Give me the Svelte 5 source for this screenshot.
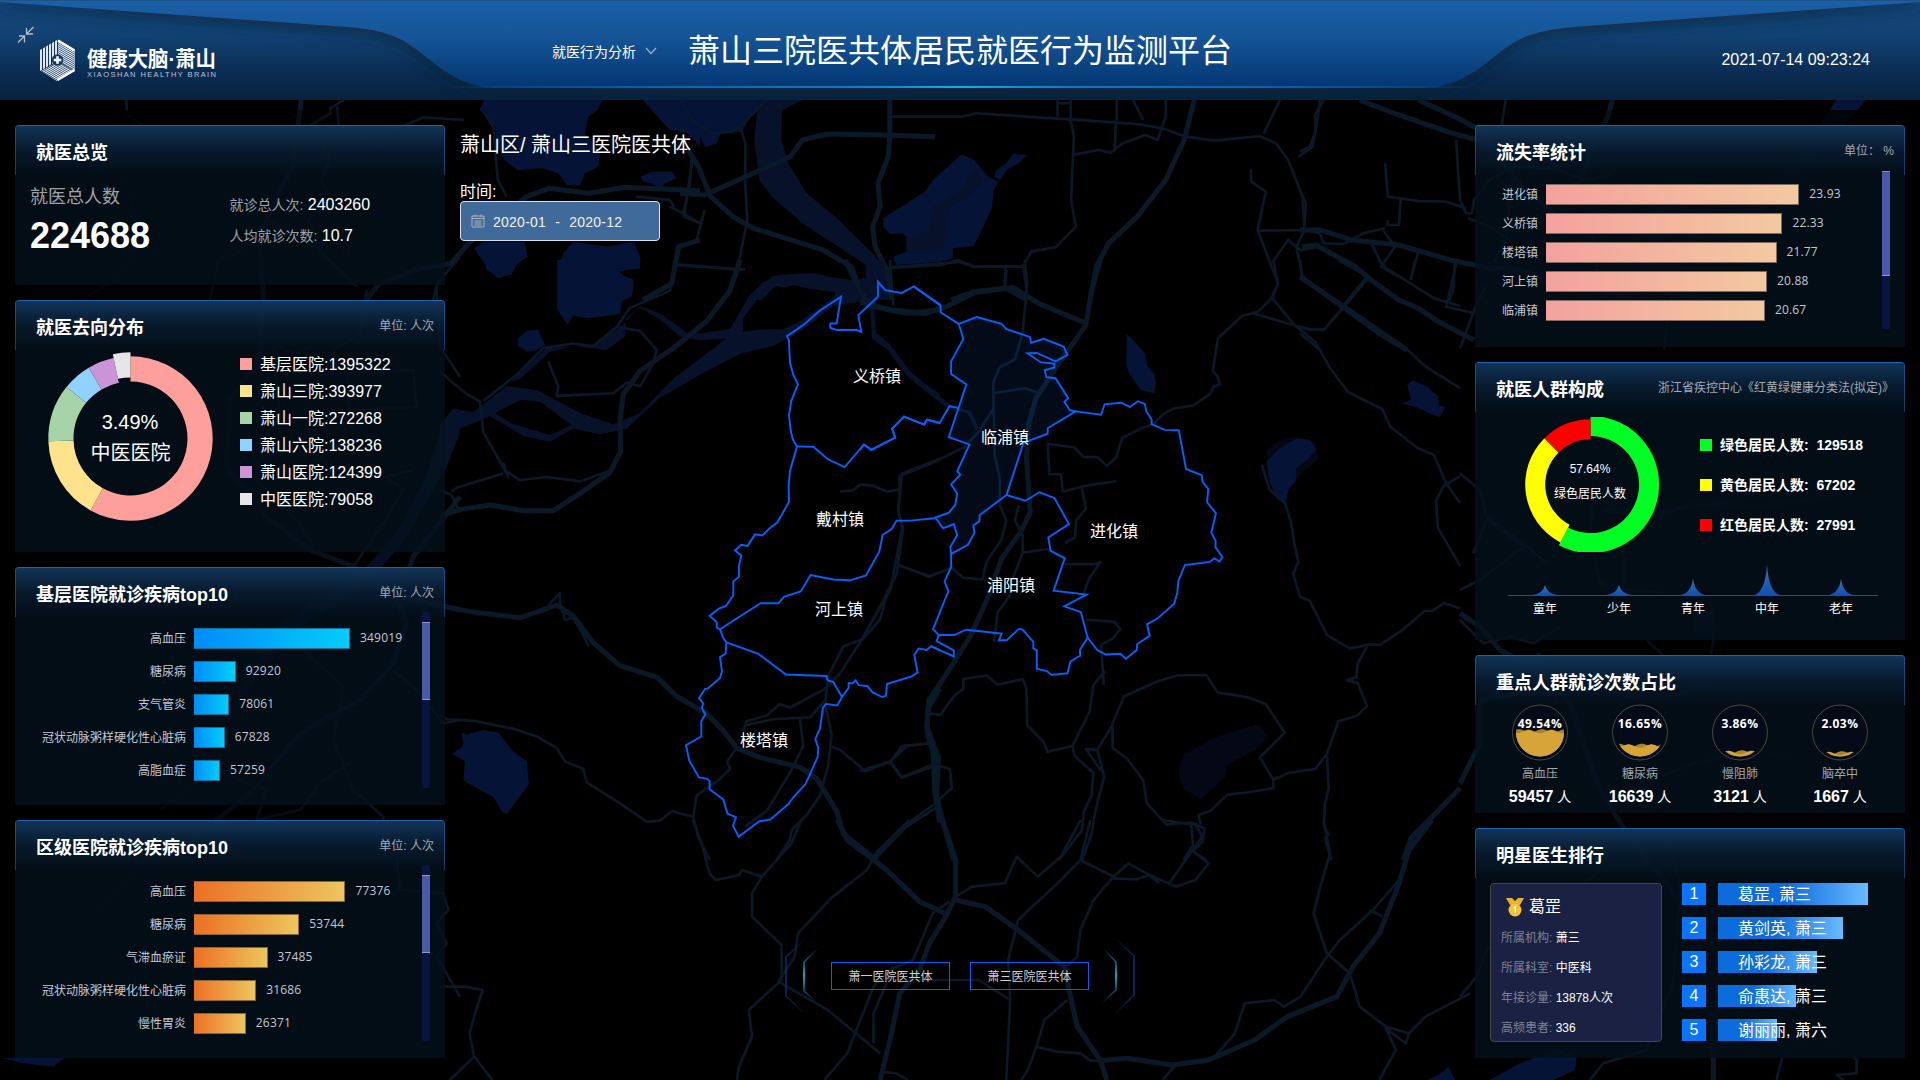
<script>
  const destinations = [
    { name: '基层医院', value: 1395322, color: '#fe9f9c' },
    { name: '萧山三院', value: 393977, color: '#fee38c' },
    { name: '萧山一院', value: 272268, color: '#a6d3a7' },
    { name: '萧山六院', value: 138236, color: '#90d2fd' },
    { name: '萧山医院', value: 124399, color: '#cb95d5' },
    { name: '中医医院', value: 79058, color: '#e6e6e6' }
  ];
  const residents = [
    { name: '绿色居民人数', value: 129518, color: '#00ff22' },
    { name: '黄色居民人数', value: 67202, color: '#ffff00' },
    { name: '红色居民人数', value: 27991, color: '#ff0000' }
  ];
  const diseaseCharts = [
    {
      title: '基层医院就诊疾病top10', tone: 'blue', scale: 155.7 / 349019,
      rows: [['高血压', 349019], ['糖尿病', 92920], ['支气管炎', 78061], ['冠状动脉粥样硬化性心脏病', 67828], ['高脂血症', 57259]]
    },
    {
      title: '区级医院就诊疾病top10', tone: 'orange', scale: 151 / 77376,
      rows: [['高血压', 77376], ['糖尿病', 53744], ['气滞血瘀证', 37485], ['冠状动脉粥样硬化性心脏病', 31686], ['慢性胃炎', 26371]]
    }
  ];
  const lossRates = [['进化镇', 23.93], ['义桥镇', 22.33], ['楼塔镇', 21.77], ['河上镇', 20.88], ['临浦镇', 20.67]];
  const ages = [['童年', 10.5], ['少年', 10.5], ['青年', 17], ['中年', 31], ['老年', 17]];
  const focus = [
    { name: '高血压', pct: '49.54%', count: 59457, level: -1 },
    { name: '糖尿病', pct: '16.65%', count: 16639, level: 13.5 },
    { name: '慢阻肺', pct: '3.86%', count: 3121, level: 20 },
    { name: '脑卒中', pct: '2.03%', count: 1667, level: 21 }
  ];
  const doctor = [['所属机构', '萧三'], ['所属科室', '中医科'], ['年接诊量', '13878人次'], ['高频患者', '336']];
  const ranking = [['葛罡, 萧三', 150], ['黄剑英, 萧三', 125], ['孙彩龙, 萧三', 99], ['俞惠达, 萧三', 78], ['谢丽丽, 萧六', 59]];
  const towns = [
    ['义桥镇', 877, 377], ['戴村镇', 840, 520], ['河上镇', 839, 610], ['楼塔镇', 764, 741],
    ['临浦镇', 1005, 438], ['进化镇', 1114, 532], ['浦阳镇', 1011, 586]
  ];

  // Ring segments, clockwise from twelve o'clock; one segment may be enlarged.
  function ring(items, cx, cy, inner, outer, active, grow) {
    const total = items.reduce((s, d) => s + d.value, 0);
    let a = 0;
    return items.map((d, i) => {
      const b = a + (d.value / total) * Math.PI * 2;
      const g = i === active ? grow : 0;
      const p = (r, t) => `${(cx + r * Math.sin(t)).toFixed(2)} ${(cy - r * Math.cos(t)).toFixed(2)}`;
      const big = b - a > Math.PI ? 1 : 0;
      const o = outer + g, n = inner + g;
      const path = `M${p(o, a)}A${o} ${o} 0 ${big} 1 ${p(o, b)}L${p(n, b)}A${n} ${n} 0 ${big} 0 ${p(n, a)}Z`;
      a = b;
      return { path, color: d.color };
    });
  }
  function wave(level, phase) {
    let d = 'M-26 30';
    for (let x = -26; x <= 26; x += 1) d += `L${x} ${(level + 1.7 * Math.cos((x * 2 * Math.PI) / 23 + phase)).toFixed(2)}`;
    return d + 'L26 30Z';
  }
  const destRing = ring(destinations, 86.5, 88.5, 57, 82.2, 5, 4);
  const resRing = ring(residents, 68.5, 67.5, 45.3, 65.3, 0, 3.3);

  // Base map, grouped in sheets: each has its own origin and scale.
  const sheets = [
    {
      t: 'scale(.4464 .3333)',
      water: ['M1085 300H1350L1338 330L1318 350L1310 400L1345 460L1340 500L1310 520L1300 556L1270 556L1250 520L1215 505L1160 510L1130 480L1110 430V380L1075 330Z',
        'M1440 300H1568V440L1540 400L1500 390L1470 345Z', 'M1062 745L1085 725H1175L1182 770L1160 790L1145 820L1115 835L1085 790Z',
        'M1250 900V810L1262 760L1285 725L1360 740L1420 725L1435 775L1432 808L1400 800L1382 810L1420 850L1415 890L1400 900Z',
        'M1435 530L1460 515L1505 515L1515 535L1490 550L1478 565L1460 550L1440 545Z'],
      river: [],
      major: ['M675 300L665 400L655 500L610 620L580 720L590 900', 'M820 900L850 850L930 810L1010 790L1050 730L1120 650L1180 590L1230 565L1320 580L1400 562L1568 572', 'M1568 720L1520 740L1505 850L1440 900'],
      minor: ['M283 300L285 345L325 380L310 440L325 500L280 530L300 640L320 720L260 840L180 900', 'M770 300L740 325L740 340L690 380L720 430L740 480L720 540L740 600L690 660L720 760L800 860', 'M755 320L760 390L800 400L850 440L865 400L950 352L1040 360', 'M1085 340L1105 380L1115 540L1135 590', 'M1568 800L1510 795', 'M970 900L980 850L1030 770', 'M470 900L490 780L530 760L600 660L640 690', 'M1550 460L1545 560M1530 640L1568 670M1500 620L1530 640L1540 590', 'M1425 590L1500 600L1510 620']
    },
    {
      t: 'translate(680 0) scale(.4082 .3333)',
      water: ['M0 300H220L180 340L150 395L100 400L90 430L62 442L50 410L10 385H0Z', 'M690 463L720 480L755 530L780 545L768 570L765 620L740 690L718 738L668 745V775L640 785L530 795L522 770L555 755V712L545 700L515 702L498 680V655L600 575L620 540Z', 'M770 530L775 510L800 490L815 462L850 465L830 490L800 510L785 540Z'],
      river: ['M192 300H300L250 330L248 420L265 490L310 580L380 650L480 770L500 830L520 900H430L380 890V850L300 835L262 862L240 850L200 900H165L200 850L240 825L330 820L400 842L455 835L455 795L400 750L300 670L225 590L195 540L182 420Z', 'M720 500L745 535L715 585L660 620L655 690L645 750L560 760L562 715L610 690L620 620L690 570Z'],
      major: ['M0 580L60 585L180 520L270 470L300 420L360 402L500 405L625 410', 'M20 450L45 500L75 590L130 650L180 685L350 750L420 800L450 900', 'M1260 300L1235 420L1190 540L1120 650L1050 730L1020 800L1005 900', 'M514 300V400L510 470L485 550L490 620L472 680L478 740L505 805L520 900', 'M665 900L720 875L800 865L850 900'],
      minor: ['M520 350H690L725 340L850 350L1000 362L1120 372L1180 385L1240 410L1310 422L1420 408L1460 430L1490 480L1525 590L1530 690L1510 740L1525 830L1568 870', 'M925 300V350M955 310H925M957 300V360L965 410L958 600L970 680L920 742L860 755L840 800L850 870', 'M510 805L640 795L680 780L720 800H840', 'M960 465L1025 450L1055 458L1085 430L1140 405L1170 420L1180 385M1068 360L1065 450M1110 300L1135 360M1190 300V350L1180 385', 'M1070 300V360', 'M1470 300L1430 400', 'M1398 508L1400 545L1435 575L1415 690L1440 770L1465 850L1450 900M1420 692L1568 690M1455 780L1490 720L1520 750L1568 740', 'M150 390L160 430V560L165 660L155 720L140 810L110 900', 'M0 795L150 810M0 735L40 725L60 630M30 480L10 650L50 670', 'M1568 300L1560 370L1550 440L1515 470', 'M800 810L795 860', 'M0 300L30 360L80 400L130 395L180 340L210 300']
    },
    {
      t: 'translate(1300 0) scale(.3954 .3333)',
      water: ['M1355 300H1430L1410 330L1300 480L1180 620L1100 700L1075 690L1150 600L1250 480L1340 330Z'],
      river: [],
      major: ['M150 300L250 345L380 398L450 420L500 460', 'M300 300L400 355L470 400L520 500L560 560L640 640', 'M790 300L780 345L740 450L700 560', 'M0 690L50 690L130 720L250 735L380 780L480 805L560 810', 'M0 830L60 880L200 1000L270 1050', 'M560 810L640 850L800 880L900 870L1050 900', 'M5 740L40 735L140 800L180 840L250 900L300 925L350 965L440 1020'],
      minor: ['M60 300L38 345L40 390L25 440L0 455', 'M215 490L222 590L300 603L370 605L420 625M255 595L250 675H220L222 660', 'M395 420L400 520L405 600L420 640L435 640L440 600L480 540L540 500L640 505L720 540L790 525', 'M0 570L15 610L10 690L50 700L60 730L110 732L160 700L215 685', 'M210 690L240 740L205 800L250 830M180 730L210 800M300 750L280 840M395 790L370 920L440 940', 'M110 915L170 830M0 985L60 990L115 915', 'M520 300L510 380M540 500L520 720L490 790', 'M425 655L480 680L530 720M740 710L760 860M940 880L920 1050', 'M0 1000L50 1050M405 1045L450 900L470 860']
    },
    {
      t: 'translate(440 260) scale(.3333 .3827)',
      water: ['M352 0H600V22L530 30L545 40L580 50L575 80L545 110L540 142L440 152L400 145L382 168L352 130Z', 'M130 0H235L215 38L175 47L140 25Z', 'M233 205L260 185L295 183L315 222L290 235L262 240L235 225Z', 'M38 1290L70 1270L65 1235L80 1240L130 1228L175 1235L220 1285L260 1310L267 1370L200 1448L185 1440L160 1403L70 1360L75 1310Z'],
      river: ['M1280 0H1330L1340 60L1300 120L1230 100L1280 50Z', 'M0 430L40 388L100 398L200 330L290 340L420 400L520 430L600 400L700 310L860 205L780 210L720 200L660 155L600 125L560 150L555 200L500 235L400 225L330 240L240 310L210 320L320 230L460 222L550 170L600 120L660 140L750 195L870 180L930 90L1000 42L1080 35L1220 50L1300 90L1250 110L1180 120L1090 180L1000 225L900 245L780 300L660 360L560 440L480 455L400 440L330 475L250 460L150 408L60 440L20 540L0 570ZM910 150L960 95L1010 68L1035 72L1060 65L1110 75L1200 85L1130 130L1070 165L1030 180L960 182L908 188ZM165 400L240 366L300 370L395 432L330 458L210 425Z', 'M1300 90L1308 190L1350 220L1400 290L1500 350V362L1440 325L1380 280L1340 230L1295 200L1290 100Z'],
      major: ['M900 0L870 80L800 160L700 230L600 290L550 350L540 420L542 500L510 555L420 610L340 655L250 655L150 640L60 652L0 668', 'M0 903L100 920L240 935L350 902L400 930L460 1000L540 1060L650 1090L710 1140L800 1185L850 1230L890 1275L960 1300L1080 1325L1130 1355L1190 1440L1210 1500L1310 1568', 'M1215 0L1250 60L1290 120L1400 140L1500 130', 'M1500 1120L1465 1170L1460 1230L1480 1290L1485 1400L1500 1470'],
      minor: ['M0 290L30 315L80 350L120 370L130 450L195 550L240 575L320 567L420 578L520 548', 'M705 0L690 80L570 125L530 175L460 225L400 218L310 230L230 300L130 368', 'M710 12L915 25M530 175L600 185L650 235L640 270L600 330L560 320L520 348L350 355L355 330L325 265', 'M35 605L50 595L190 558M0 600L35 615L60 660', 'M0 1190L20 1200L110 1205L220 1225L290 1245L350 1275L375 1310L430 1330L440 1365L540 1420L620 1468L660 1465L695 1440L760 1455L775 1510L810 1568', 'M1350 0L1360 120', 'M1200 605L1240 602L1260 587L1300 590L1340 605L1380 600L1378 565L1500 522M1380 600L1375 660L1390 700L1370 820L1330 890L1260 1000L1200 1080L1155 1120L1050 1170L1020 1160L980 1190L920 1205L910 1230', 'M1375 797L1470 827L1500 815', 'M1345 860L1320 940L1270 990L1210 1010L1165 1085L1155 1160L1175 1240L1165 1320L1140 1400L1100 1450L1055 1490L1050 1515L1010 1568', 'M890 1275L862 1310L870 1330L835 1360L800 1380L770 1400L760 1455M920 1215L1000 1200L1110 1195L1155 1150', 'M1080 1200L1090 1270L1050 1340L980 1440L915 1480', 'M1170 1270L1200 1280L1275 1335L1350 1312L1400 1270L1480 1262M1350 1312L1385 1352L1500 1310M1500 1425L1400 1480L1310 1560', 'M325 902L360 870V895L375 940L400 935L430 980L445 1008', 'M190 530L205 570']
    },
    {
      t: 'translate(860 260) scale(.3827)',
      shade: ['M835 1320L845 1295L920 1250L985 1228L1040 1213L1068 1245L1040 1275L960 1320L955 1350L890 1410L845 1380L833 1345Z', 'M1062 500L1090 475L1145 460L1190 480L1198 520L1150 560L1130 590L1080 570Z'],
      water: ['M697 195L715 210L745 245L750 275L770 300L773 325L768 348L735 340L705 300L695 275L697 235Z', 'M1062 525L1100 490L1140 467L1175 470L1192 495L1170 520L1140 545L1138 580L1120 600L1112 635L1090 625L1070 580Z', 'M1418 375L1440 365L1430 325L1445 315L1480 330L1510 355L1512 380L1530 385L1515 410L1485 400L1455 385Z', 'M85 0H230L150 10Z'],
      river: ['M0 60L50 50L65 70L40 110L0 80Z', 'M35 130L40 195L90 235L130 290L200 350L240 380L290 395L310 440L302 445L280 400L230 388L180 350L120 300L80 240L30 205Z'],
      major: ['M628 0L605 80L590 170L520 270L460 360L440 430L435 520L445 660L420 710L370 780L335 880L290 980L240 1060L180 1150L175 1220L205 1300L200 1400L220 1480L245 1568', 'M0 110L80 130L170 140L230 120L300 85L400 72L470 115L590 165', 'M0 1535L40 1568', 'M1568 1380L1500 1450L1440 1510L1420 1568'],
      minor: ['M75 20L260 5L300 18L430 16M380 20L378 75M430 0L437 60L425 190L405 260L365 280L348 320L352 510L365 570V640L382 680L370 730L330 790L320 835L270 830L240 805L180 827L100 797', 'M350 348L430 335L470 348M350 385L310 450L270 490L220 515L110 558L100 650L110 700L80 860L0 1000', 'M1080 0L1092 60L1075 100L1040 135L1000 145L935 205L922 290L935 305L940 325L925 330L915 350L870 380L820 388L790 405L765 430L735 440L685 465L670 515L645 538L620 515L585 515L560 490L490 480L495 560L525 560L530 605L590 590L670 578', 'M1150 0L1155 45L1260 115L1420 225L1480 280L1568 335M1250 0L1330 45L1400 100L1480 140L1568 195M1330 45L1215 180L1180 183L1080 155L1020 138M1355 0L1372 20L1500 100L1568 120M1450 0L1440 50M1555 0L1550 80L1530 125', 'M1078 100L1135 170L1190 215L1230 285L1275 345L1365 390L1385 435L1455 490L1500 510L1530 580L1568 635M1568 565L1525 590L1505 630L1510 700L1568 800', 'M1050 535L1070 600L1110 635L1125 680L1135 740L1145 790L1132 820L1150 880L1175 890L1220 980L1280 1015L1330 1005L1360 1005L1420 965L1475 917H1495L1525 897L1568 910', 'M1325 1010L1300 1055L1297 1090L1272 1098L1300 1105L1325 1165L1300 1190L1250 1205L1220 1290L1190 1330L1120 1340L1080 1358L1045 1300L1110 1235L1060 1160L1010 1142L935 1130L905 1085L830 1085L780 1100L690 1140L660 1210V1275L700 1305L740 1360L750 1420L800 1475L865 1470L870 1530L845 1568M865 1470L900 1485L895 1520L870 1545L905 1568M1080 1358V1380L1020 1390L960 1397L915 1440L885 1450L890 1475', 'M1220 1295L1225 1380L1215 1420L1212 1480L1225 1500L1215 1510L1232 1568', 'M180 1185L210 1188L245 1140L270 1120V1095L330 1085L360 1110L425 1095L435 1120L437 1215L480 1260L490 1285L555 1270L600 1180L610 1110L640 1075', 'M580 595L590 650L565 680L562 725L535 740M535 795L615 795L628 790L600 830L585 870M590 940L665 945L680 965L660 990L630 1005L637 1110', 'M555 1270L560 1295L610 1340L605 1400L585 1440L580 1490L520 1568M660 1215L620 1280L590 1278L630 1335M620 1280L638 1350L615 1440L605 1500L580 1568', 'M0 1335L80 1310L110 1270L190 1262M80 1310L110 1352L200 1320L235 1330L240 1380L190 1425L100 1490L40 1560', 'M415 640L405 680L425 720V765L490 755L535 780M425 765L400 830L390 880L360 920L350 1000']
    },
    {
      t: 'translate(440 820) scale(.6569 .3333)',
      water: ['M1503 780L1520 765L1535 740L1545 780Z'],
      river: [],
      major: ['M605 0L620 60L680 150L730 245L775 285M765 0L785 120V230L770 290L745 370L730 450L700 520L685 660L670 780M785 240L830 260L880 330L950 440L970 620L1005 720L1015 780', 'M1510 0L1475 90L1460 190L1430 340L1390 440L1365 530L1290 590L1240 660L1170 720L1115 735L1045 715L1005 722'],
      minor: ['M385 0L400 80L410 160L420 180L455 165L460 150L490 170L475 220V290L520 375L520 480L470 570L475 650L455 740L452 780', 'M550 0L535 70L490 170M715 0L665 95L650 150L595 235L545 340L540 410L515 485L590 570L670 700', 'M990 0L975 120L940 190L880 300L865 420L868 540L862 780M975 0L945 110L910 170L878 110L860 190L810 200L785 230', 'M975 120L1025 170L995 240L975 330L970 410L950 445M1025 175L1060 178L1080 165L1120 200L1150 180L1170 130L1140 85M1110 190L1160 50L1150 10M1025 170L1048 130L1080 165L1095 190M1100 0L1150 15', 'M775 245L750 280L735 350L720 420L690 445L660 580V670M690 440L660 500L620 700L585 780M720 480L820 480L868 540', 'M955 540L920 600L908 680L940 695L975 700L990 722H1005M908 680L895 750L885 780M1120 735L1100 780', 'M1345 0L1355 100L1340 200L1330 280L1350 400L1385 460L1400 560L1440 620L1475 640L1500 590L1568 520M1475 640L1470 670L1440 625L1455 690L1430 780', 'M1460 180L1420 270L1370 360L1350 410L1310 530L1285 560L1270 540L1225 550L1210 640L1175 720M1435 290L1415 270', 'M670 755L695 760L712 780', 'M0 500L40 500L65 510L55 570L45 640L52 710L80 780M52 710L15 780']
    },
    {
      t: 'translate(1460 350) scale(.3333)',
      water: ['M700 790L760 780L770 830L740 865L705 860ZM85 1010L240 905L250 950L100 1030Z', 'M90 2190L180 2140L290 2100L350 2120L345 2160L280 2190Z'],
      river: [],
      major: ['M0 790L60 830L120 900L250 970L330 1060L370 1180L420 1320L500 1450L570 1540L620 1600L700 1720L740 1900L760 2100V2190', 'M430 480L600 490L720 460L900 470L1100 440L1330 350', 'M0 1300L60 1180L60 1050L180 1030L330 1030'],
      minor: ['M0 370L60 420L80 500L190 580L260 640M40 610L80 510L190 590L60 690L0 720', 'M0 810L70 880L150 860L220 880L300 830M150 920L180 950M300 980L320 1000L380 1005L500 1040L640 1040L740 1000L760 870L690 780', 'M560 870L700 1000L860 1050L900 1160M460 1380L600 1280L700 1240L900 1200L1000 1230', 'M400 400L390 560L420 700L500 720L750 740L760 860M490 580L490 710', 'M0 1940L50 1880L80 1800L170 1720L400 1580L440 1520', 'M390 2190L430 2140L560 2100L640 1900L660 1600L620 1450', 'M950 2190L970 2110L1050 2060L1130 2080L1190 2130L1190 2170L1130 2175L1150 2190']
    },
    {
      t: 'translate(0 290) scale(.3333)',
      water: ['M0 2303H195L160 2330L110 2325L60 2318Z', 'M1358 1390L1380 1375V1405Z'],
      river: ['M1330 400L1370 350L1380 430L1340 530L1290 620L1220 740L1130 850L1000 950L850 1040L760 1180L720 1260L680 1300L740 1160L830 1010L960 920L1100 830L1180 740L1270 580Z'],
      major: ['M790 0L780 200L690 330L680 530L800 680L930 780L1060 830L1180 900L1220 1000L1180 1120L1080 1230L900 1330L760 1500L640 1600L400 1750L250 1900L160 2100', 'M1380 620L1240 800L1200 920L1380 960'],
      minor: ['M1100 0L1080 130L1000 180L980 250L1240 240L1250 350L1050 360L1040 240', 'M1310 0L1320 170L1380 260', 'M1180 1140L1250 1200L1330 1300L1380 1290M900 1070L1030 1190L1000 1350L1060 1500L1150 1580L1150 1680L1190 1700L1200 1800L1330 1810L1345 1860L1310 1900L1340 1960L1310 2000L1380 2120', 'M480 1560L640 1440L800 1500L770 1590L900 1560L960 1480L1060 1410', 'M940 770L900 700L720 520L840 380L820 160L880 190L940 170M1060 830L1150 700L1210 600L1160 560L1240 540']
    }
  ];

  // District outlines, drawn on the two central sheets.
  const D = 'translate(440 260) scale(.3333 .3827)';
  const E = 'translate(860 260) scale(.3827)';
  const borders = [
    [D, 'M1314 96V57L1336 79L1385 86L1422 69L1500 118M1314 96L1255 144L1264 188L1250 183H1190L1171 177V166H1190L1203 96L1140 132L1090 170L1041 199L1047 210L1050 268L1060 300L1074 325L1054 368L1047 405L1052 445L1059 470L1071 487L1050 552L1046 590L1047 632L1012 686L990 700L967 720L945 717L923 747L904 744L885 759L904 772L897 800V828L880 840V876L858 904L838 910L809 930L830 946V960L840 965L850 988L859 999L857 1028L840 1038L846 1075L840 1092L805 1119L795 1121L777 1145L790 1159L785 1170L796 1187L784 1205V1245L738 1268L748 1308L777 1352L800 1355L809 1361V1383L850 1410L863 1447L888 1456L879 1478L896 1507L957 1467L991 1462L1045 1422L1060 1404L1096 1370L1114 1336L1133 1299L1135 1275L1126 1252L1140 1224L1149 1170L1158 1160L1192 1164L1206 1142L1226 1118V1106L1238 1106L1247 1098L1256 1111L1282 1113L1298 1130L1327 1142L1338 1138L1341 1108L1415 1088L1433 1078L1423 1032L1436 1015L1460 1019L1474 1009L1500 1020'],
    [D, 'M1071 487L1120 488L1163 520L1214 541L1272 482L1294 496L1366 464L1356 441L1392 409L1453 430L1461 417L1500 426'],
    [D, 'M840 965L962 897H1015L1032 880L1082 866L1112 823L1180 835L1230 837L1278 824L1318 762L1328 718L1355 703L1370 681H1412L1490 674'],
    [D, 'M859 999L955 1029L1038 1083L1160 1087L1163 1098L1180 1103L1206 1142'],
    [E, 'M140 69L210 117L211 137L258 167M0 497L10 482L30 496L92 464L84 441L115 409L168 430L175 417L208 426L234 382L258 387'],
    [E, 'M383 614L432 629L469 607L508 622L546 690L492 725L498 760L535 779L506 864L592 874L534 905L577 920L595 987L575 1018V1034L550 1049L542 1080L500 1084L488 1074L462 1068V1020L453 1015V998L425 966L415 964L384 993L363 994L370 976L277 966L246 980H206L200 996L245 1020V1036L185 1009'],
    [E, 'M560 395L630 404L639 377L682 373L705 384L726 369L744 376L748 395L762 417V429L796 444L833 445L852 546L893 562L895 580L910 598L907 633L930 662L918 713L929 733V751L947 776L940 788L926 780L914 789L849 797L832 839L829 870L821 898L777 937L750 952L757 982L724 1004L723 1019L695 1042L680 1029L642 1031L620 1019L595 987'],
    [E, 'M238 768V802L221 840L231 865L191 964L206 980']
  ];
  const active = 'M258 167L305 149L370 167L382 180L444 201L447 216L480 206L532 226L542 248L511 265L462 243L438 244L472 267L508 271V281L483 288L487 306L511 309L544 361L534 371L548 392L563 396L491 439L490 454L427 478L383 614L313 666L312 683L296 693L299 713L282 744L238 768L236 750L254 719L245 690L217 701L197 673L232 660L249 640L254 610L238 586L262 561L254 552L286 482L232 463L278 325L238 298V265L270 206Z';
</script>

{#snippet panelHead(title, note)}
  <header class="panel-head">
    <h2>{title}</h2>
    {#if note}<span class="note">{note}</span>{/if}
  </header>
{/snippet}

{#snippet bars(rows, tone, scale, thumb)}
  <div class="chart {tone}">
    <ul class="bars">
      {#each rows as [name, value]}
        <li><span class="bar-name">{name}</span><span class="bar" style="width:{value * scale + 0.4}px"></span><span class="bar-value">{value}</span></li>
      {/each}
    </ul>
    <div class="scroll"><i class={thumb}></i></div>
  </div>
{/snippet}

<div class="screen">
  <svg class="map" width="1920" height="1080" viewBox="0 0 1920 1080">
    <defs>
      <linearGradient id="dimL"><stop offset="0" stop-color="#000" stop-opacity=".95" /><stop offset=".35" stop-color="#000" stop-opacity=".75" /><stop offset="1" stop-color="#000" stop-opacity="0" /></linearGradient>
      <linearGradient id="dimR"><stop offset="0" stop-color="#000" stop-opacity="0" /><stop offset=".65" stop-color="#000" stop-opacity=".65" /><stop offset="1" stop-color="#000" stop-opacity=".95" /></linearGradient>
    </defs>
    {#each sheets as s}
      <g transform={s.t}>
        {#each s.shade ?? [] as d}<path class="shade" {d} />{/each}
        {#each s.water as d}<path class="water" {d} />{/each}
        {#each s.river as d}<path class="river" {d} />{/each}
        {#each s.major as d}<path class="road major" {d} />{/each}
        {#each s.minor as d}<path class="road" {d} />{/each}
      </g>
    {/each}
    <rect x="0" y="110" width="460" height="948" fill="url(#dimL)" />
    <rect x="1460" y="110" width="460" height="948" fill="url(#dimR)" />
    <g transform={E}><path class="border active" d={active} /></g>
    {#each borders as [t, d]}<g transform={t}><path class="border" {d} /></g>{/each}
    {#each towns as [name, x, y]}<text class="town" {x} y={y + 5}>{name}</text>{/each}
  </svg>

  <header class="top">
    <svg class="top-bg" width="1920" height="100" viewBox="0 0 1920 100">
      <defs>
        <linearGradient id="base" x2="0" y2="1"><stop offset="0" stop-color="#15487c" /><stop offset=".35" stop-color="#124274" /><stop offset=".75" stop-color="#0a2b50" /><stop offset="1" stop-color="#08223e" /></linearGradient>
        <linearGradient id="mid" x2="0" y2="1"><stop offset="0" stop-color="#1b60a8" /><stop offset=".4" stop-color="#165597" /><stop offset="1" stop-color="#023672" /></linearGradient>
        <linearGradient id="glow"><stop offset="0" stop-color="#0a5db4" stop-opacity="0" /><stop offset=".2" stop-color="#0560b8" /><stop offset=".4" stop-color="#0a78d0" /><stop offset=".5" stop-color="#08b4e4" /><stop offset=".6" stop-color="#0a78d0" /><stop offset=".8" stop-color="#0560b8" /><stop offset="1" stop-color="#0a5db4" stop-opacity="0" /></linearGradient>
        <filter id="soft" x="-5%" y="-30%" width="110%" height="180%"><feGaussianBlur stdDeviation="8" /></filter>
      </defs>
      <rect width="1920" height="100" fill="url(#base)" />
      <path filter="url(#soft)" fill="#0c2036" opacity=".75" d="M0 6L346 32C380 34 402 42 422 58C452 80 470 94 505 94H1415C1450 94 1468 80 1498 58C1518 42 1540 34 1574 32L1920 6V0H0Z" />
      <path fill="url(#mid)" d="M0 0V2L346 27C380 29 398 36 416 49C446 73 464 88 500 88H1420C1456 88 1474 73 1504 49C1522 36 1540 30 1574 27L1920 2V0Z" />
      <rect x="440" y="86" width="1040" height="2" fill="url(#glow)" />
      <rect width="1920" height="1" fill="#1d5288" />
    </svg>
    <svg class="shrink" width="18" height="18" viewBox="0 0 18 18"><path d="M16.500 1L9.500 8M9.500 2V8H16M1 16.500L7.500 10M2 10H7.500V16.500" /></svg>
    <svg class="logo" width="180" height="44" viewBox="0 0 180 44">
      <defs><clipPath id="faceL"><path d="M0 11L17 1V22L0 32Z" /></clipPath><clipPath id="faceR"><path d="M18 1L35 11V32L18 22Z" /></clipPath><clipPath id="faceB"><path d="M1 32L18 23L34 32L17 42Z" /></clipPath></defs>
      <g clip-path="url(#faceL)" class="hatch">{#each [1, 4, 7, 10, 13, 16] as x}<path d="M{x} 0V34" />{/each}</g>
      <g clip-path="url(#faceR)" class="hatch thin">{#each [0, 2, 4, 6, 8, 10, 12, 14, 16, 18, 20, 22] as y}<path d="M17 {y}L36 {y + 11}" />{/each}</g>
      <g clip-path="url(#faceB)" class="hatch thin">{#each [24, 26, 28, 30, 32, 34, 36, 38, 40, 42, 44, 46] as y}<path d="M0 {y + 9}L36 {y - 12}" />{/each}</g>
      <path class="edge" d="M18 1.500L34.500 11.500M34.500 31L17.500 41" />
      <circle cx="17.500" cy="21" r="5.800" fill="#0f3a68" />
      <path d="M17.500 17.200V24.800M13.700 21H21.300" stroke="#fff" stroke-width="2.600" />
      <text class="brand" x="47" y="27" textLength="129" lengthAdjust="spacingAndGlyphs">健康大脑·萧山</text>
      <text class="brand-en" x="47" y="37.500" textLength="129">XIAOSHAN HEALTHY BRAIN</text>
    </svg>
    <div class="nav">就医行为分析<svg width="12" height="8" viewBox="0 0 12 8"><path d="M1 1L6 6.500L11 1" /></svg></div>
    <h1>萧山三院医共体居民就医行为监测平台</h1>
    <time>2021-07-14 09:23:24</time>
  </header>

  <main>
    <section class="side left">
      <article class="panel">
        {@render panelHead('就医总览')}
        <div class="overview">
          <div class="total"><span>就医总人数</span><strong>224688</strong></div>
          <div class="sub"><p>就诊总人次: <b>2403260</b></p><p>人均就诊次数: <b>10.7</b></p></div>
        </div>
      </article>
      <article class="panel">
        {@render panelHead('就医去向分布', '单位: 人次')}
        <div class="dest">
          <svg width="174" height="176" viewBox="0 0 174 176">
            {#each destRing as s}<path d={s.path} fill={s.color} />{/each}
            <text x="86" y="79">3.49%</text><text x="86.500" y="110">中医医院</text>
          </svg>
          <ul class="legend">{#each destinations as d}<li><i style="background:{d.color}"></i><span>{d.name}:{d.value}</span></li>{/each}</ul>
        </div>
      </article>
      {#each diseaseCharts as c}
        <article class="panel">
          {@render panelHead(c.title, '单位: 人次')}
          {@render bars(c.rows, c.tone, c.scale, 'low')}
        </article>
      {/each}
    </section>

    <section class="center">
      <p class="crumb">萧山区/ 萧山三医院医共体</p>
      <p class="time-label">时间:</p>
      <div class="picker">
        <svg width="14" height="14" viewBox="0 0 14 14"><path d="M1 2H13V13H1ZM1 4.500H13M4 .5V3M10 .5V3M3.500 7H10.500M3.500 9H10.500M3.500 11H10.500" /></svg>
        <span>2020-01</span><em>-</em><span>2020-12</span>
      </div>
      <div class="switch">
        <svg width="34" height="80" viewBox="0 0 34 80">
          <defs>
            <linearGradient id="bo" x2="0" y2="1"><stop offset="0" stop-color="#0a3a90" stop-opacity="0" /><stop offset=".3" stop-color="#07307a" /><stop offset=".7" stop-color="#07307a" /><stop offset="1" stop-color="#0a3a90" stop-opacity="0" /></linearGradient>
            <linearGradient id="bi" x2="0" y2="1"><stop offset="0" stop-color="#0a6a90" stop-opacity="0" /><stop offset=".28" stop-color="#0b7398" /><stop offset=".5" stop-color="#12e4f4" /><stop offset=".72" stop-color="#0b7398" /><stop offset="1" stop-color="#0a6a90" stop-opacity="0" /></linearGradient>
          </defs>
          <path stroke="url(#bo)" d="M20 3L1 21V60L20 78" /><path stroke="url(#bi)" d="M33 12L19 26V55L32 67" />
        </svg>
        <button>萧一医院医共体</button><button>萧三医院医共体</button>
        <svg width="34" height="80" viewBox="0 0 34 80"><path stroke="url(#bo)" d="M14 2L33 20V59L13 79" /><path stroke="url(#bi)" d="M2 12L15 26V54L1 67" /></svg>
      </div>
    </section>

    <section class="side right">
      <article class="panel">
        {@render panelHead('流失率统计', '单位： %')}
        {@render bars(lossRates, 'pink', 10.57, 'high')}
      </article>
      <article class="panel">
        {@render panelHead('就医人群构成', '浙江省疾控中心《红黄绿健康分类法(拟定)》')}
        <div class="crowd">
          <svg class="crowd-ring" width="138" height="135" viewBox="0 0 138 135">
            {#each resRing as s}<path d={s.path} fill={s.color} />{/each}
            <text x="68" y="56">57.64%</text><text x="68" y="80.500">绿色居民人数</text>
          </svg>
          <ul class="legend bold">{#each residents as d}<li><i style="background:{d.color}"></i><span>{d.name}:&nbsp; {d.value}</span></li>{/each}</ul>
        </div>
        <svg class="ages" width="370" height="60" viewBox="0 0 370 60">
          <defs><linearGradient id="peak" x2="0" y2="1"><stop offset="0" stop-color="#3a72b4" /><stop offset="1" stop-color="#0f4fb4" /></linearGradient></defs>
          {#each ages as [name, h], i}
            {@const x = 37 + i * 74}
            <path fill="url(#peak)" d="M{x - 15} 35.500Q{x - 2} 34.500 {x} {35.5 - h}Q{x + 2} 34.500 {x + 15} 35.500Z" />
            <text {x} y="52.500">{name}</text>
          {/each}
          <path d="M0 35.500H370" stroke="#1450a8" />
        </svg>
      </article>
      <article class="panel">
        {@render panelHead('重点人群就诊次数占比')}
        <ul class="focus">
          {#each focus as f, i}
            <li>
              <svg width="58" height="57" viewBox="-29 -28.500 58 57">
                <clipPath id="drop{i}"><circle r="24" /></clipPath>
                <circle r="24" fill="#040a18" /><circle r="27.500" class="rim" />
                <g clip-path="url(#drop{i})"><path fill="#a8832f" d={wave(f.level - 0.6, 2.6)} /><path fill="#d6a437" d={wave(f.level, 0)} /></g>
                <text x="-.3" y="-4.200" textLength={f.pct.length === 6 ? 44 : 36.5}>{f.pct}</text>
              </svg>
              <span>{f.name}</span>
              <p><b>{f.count}</b> 人</p>
            </li>
          {/each}
        </ul>
      </article>
      <article class="panel">
        {@render panelHead('明星医生排行')}
        <div class="stars">
          <div class="card">
            <h3>
              <svg width="18" height="19" viewBox="0 0 18 19"><path fill="#e8b32c" d="M0 0H6L9 3L12 0H18L14 7H4Z" /><path fill="#0f1a40" d="M7.500 0H10.500L9 1.700Z" /><circle cx="9" cy="12" r="6.500" fill="#f3c23a" /><path d="M7.500 10L9.300 8.800V15" stroke="#fff" stroke-width="1.300" fill="none" /></svg>
              葛罡
            </h3>
            {#each doctor as [k, v]}<p>{k}: <b>{v}</b></p>{/each}
          </div>
          <ol>
            {#each ranking as [name, w], i}
              <li><i>{i + 1}</i><div class="rank" style="--w:{w}px"><span>{name}</span></div></li>
            {/each}
          </ol>
        </div>
      </article>
    </section>
  </main>
</div>

<style>
  :global(body) { margin: 0; background: #000; }
  .screen { position: relative; width: 1920px; height: 1080px; overflow: hidden; background: #000; color: #fff; font-family: "Liberation Sans", "Noto Sans CJK SC", sans-serif; display: flex; flex-direction: column; }
  h1, h2, h3, p, ul, ol { margin: 0; padding: 0; font-weight: normal; }
  li { list-style: none; }
  i, em { font-style: normal; }
  svg { display: block; flex: none; }

  .map { position: absolute; inset: 0; }
  .water { fill: #051436; }
  .shade { fill: #030814; }
  .river { fill: #07122a; fill-rule: evenodd; }
  .road { fill: none; stroke: #0a1927; stroke-width: 2.6; stroke-linejoin: round; vector-effect: non-scaling-stroke; }
  .road.major { stroke-width: 5; }
  .border { fill: none; stroke: #0062ff; stroke-width: 1.9; vector-effect: non-scaling-stroke; }
  .border.active { fill: rgba(22, 66, 140, .17); }
  .town { font-size: 16px; fill: #fff; text-anchor: middle; }

  .top { position: relative; flex: none; height: 100px; display: flex; box-sizing: border-box; padding-right: 50px; }
  .top-bg { position: absolute; inset: 0; }
  .top > :not(.top-bg) { position: relative; }
  .shrink { margin: 26px 0 0 17px; }
  .shrink path { fill: none; stroke: #b9bcc2; stroke-width: 1.3; }
  .logo { margin: 39px 0 0 5px; }
  .hatch { stroke: #eef2f7; stroke-width: 1.9; }
  .hatch.thin { stroke-width: 1.1; }
  .edge { stroke: #fff; stroke-width: 2.6; }
  .brand { font-size: 21px; font-weight: bold; fill: #fff; }
  .brand-en { font-size: 7.5px; fill: #b8c4d2; }
  .nav { margin-left: 332px; width: 136px; height: 101px; display: flex; align-items: center; gap: 9px; font-size: 14px; white-space: nowrap; }
  .nav svg path { fill: none; stroke: #9fb0c4; stroke-width: 1.2; }
  h1 { font-size: 32px; line-height: 102px; white-space: nowrap; }
  time { margin-left: auto; font-size: 16px; line-height: 120px; }

  main { position: relative; flex: 1; display: flex; gap: 15px; padding: 25px 15px 22px; }
  .side { width: 430px; display: grid; gap: 15px; flex: none; }
  .left { grid-template-rows: 160px 252px 238px 238px; }
  .right { grid-template-rows: 222px 278px 158px 230px; }
  .panel { background: rgba(4, 17, 29, .76); border-radius: 4px 4px 0 0; min-width: 0; }
  .panel-head { position: relative; height: 50px; box-sizing: border-box; display: flex; justify-content: space-between; padding: 0 11px 0 21px; border-radius: 4px 4px 0 0; border-top: 1px solid #1c65b2; background: linear-gradient(#113457, rgba(10, 34, 60, .6) 50%, transparent); }
  .panel-head::before, .panel-head::after { content: ""; position: absolute; top: 2px; bottom: 0; width: 1px; background: linear-gradient(#1a5390, #123a62); }
  .panel-head::before { left: 0; }
  .panel-head::after { right: 0; }
  h2 { font-size: 18px; font-weight: bold; line-height: 54px; }
  .note { font-size: 12px; line-height: 51px; color: #a3aab2; }

  .overview { display: flex; padding-left: 15px; }
  .total { width: 199.500px; display: flex; flex-direction: column; padding-top: 9px; }
  .total span { font-size: 18px; line-height: 27px; color: #9fa3a7; }
  .total strong { font-size: 36px; line-height: 49px; }
  .sub { padding-top: 14px; font-size: 14px; line-height: 31px; color: #9fa3a7; }
  .sub p { height: 31px; }
  .sub b { font-size: 16px; font-weight: normal; color: #fff; margin-left: .5px; }

  .dest { display: flex; gap: 22px; padding-left: 29px; }
  .dest text { font-size: 20px; fill: #fff; text-anchor: middle; }
  .legend li { display: flex; align-items: center; gap: 8px; height: 27px; font-size: 16px; }
  .legend i { width: 12px; height: 12px; }
  .legend span { padding-bottom: 2px; }

  .chart { display: flex; justify-content: space-between; padding-right: 15px; height: 0; font-size: 12px; color: #c3c8d4; }
  .bars { padding-top: 5px; }
  .bars li { display: flex; align-items: center; height: 33px; }
  .bar-name { width: 171px; text-align: right; margin-right: 8px; padding-bottom: 2px; white-space: nowrap; }
  .bar { box-sizing: border-box; height: 21px; border: solid; border-width: 1px 1px 1px 0; }
  .bar-value { margin-left: 10px; padding-bottom: 2px; font-family: "Open Sans", sans-serif; letter-spacing: .15px; }
  .blue .bar { background: linear-gradient(90deg, #008cfa, #04cdf8); border-color: #07739d; }
  .orange .bar { background: linear-gradient(90deg, #ec7024, #ecc65e); border-color: #8a6434; }
  .pink .bar { background: linear-gradient(90deg, #f4a19e, #f3c9a0); border-color: #7f6a62; }
  .pink .bars li { height: 29px; }
  .pink .bar-name { width: 63px; }
  .scroll { width: 8px; height: 176px; margin-top: -5px; background: #081542; border-radius: 2px; flex: none; }
  .scroll i { display: block; box-sizing: border-box; background: #4b5aa8; border: solid #8c98cc; border-width: 1px 0; }
  .scroll .low { height: 78px; transform: translateY(10px); }
  .pink .scroll { height: 158px; margin-top: -4px; }
  .scroll .high { height: 105px; }

  .crowd { display: flex; gap: 40px; padding: 5px 0 0 47px; }
  .crowd-ring { overflow: hidden; }
  .crowd text, .ages text { font-size: 12px; fill: #fff; text-anchor: middle; }
  .legend.bold { padding-top: 8px; }
  .legend.bold li { height: 40px; font-size: 14px; font-weight: bold; }
  .ages { margin: 8px 0 0 33px; }

  .focus { display: flex; padding-left: 15px; margin-top: -1px; }
  .focus li { width: 100px; display: flex; flex-direction: column; align-items: center; }
  .rim { fill: none; stroke: #4c463f; }
  .focus text { font: bold 12px "Open Sans", sans-serif; fill: #fff; text-anchor: middle; }
  .focus span { font-size: 12px; line-height: 26px; color: #a3a8ad; }
  .focus p { font-size: 14px; line-height: 20px; }
  .focus b { font-size: 16px; }

  .stars { display: flex; gap: 20px; padding: 5px 0 0 15px; }
  .card { box-sizing: border-box; width: 172px; height: 159px; border: 1px solid #4a4643; border-radius: 4px; background: #1a2142; padding-left: 10px; }
  h3 { display: flex; align-items: center; gap: 5px; padding-left: 5px; height: 46px; font-size: 16px; line-height: 46px; }
  .card p { font-size: 12px; line-height: 30px; height: 30px; color: #7e8398; transform: translateY(-7px); }
  .card b { font-weight: normal; color: #fff; }
  ol li { display: flex; gap: 12px; height: 34px; }
  ol i { width: 24px; height: 22px; line-height: 22px; text-align: center; background: #0a74ff; font-size: 16px; }
  .rank { width: 150px; height: 22px; line-height: 24px; font-size: 16px; padding-left: 20px; box-sizing: border-box; white-space: nowrap; background: linear-gradient(90deg, #0d6cdc 45%, #68bbff) 0 0 / var(--w) 100% no-repeat; }

  .center { flex: 1; display: flex; flex-direction: column; }
  .crumb { font-size: 20px; line-height: 40px; }
  .time-label { font-size: 16px; line-height: 20px; height: 19px; margin-top: 17px; }
  .picker { box-sizing: border-box; width: 200px; height: 40px; border: 1px solid #dcdfe6; border-radius: 4px; background: #406a9a; display: flex; align-items: center; padding-left: 10px; font-size: 14px; letter-spacing: .25px; color: #f0f2f5; }
  .picker svg { margin-right: 8px; }
  .picker span, .picker em { padding-top: 1px; }
  .picker path { fill: none; stroke: #aab3c0; }
  .picker em { width: 23px; text-align: center; }
  .switch { margin: auto auto 42px; display: flex; align-items: center; }
  .switch path { fill: none; stroke-width: 1.5; }
  .switch button { width: 119px; height: 28px; border: 1px solid #0062ff; background: transparent; color: #d0d0d0; font: inherit; font-size: 12px; padding: 0 0 1px; margin-left: 12px; }
  .switch button + button { margin: 0 12px 0 20px; }
</style>
